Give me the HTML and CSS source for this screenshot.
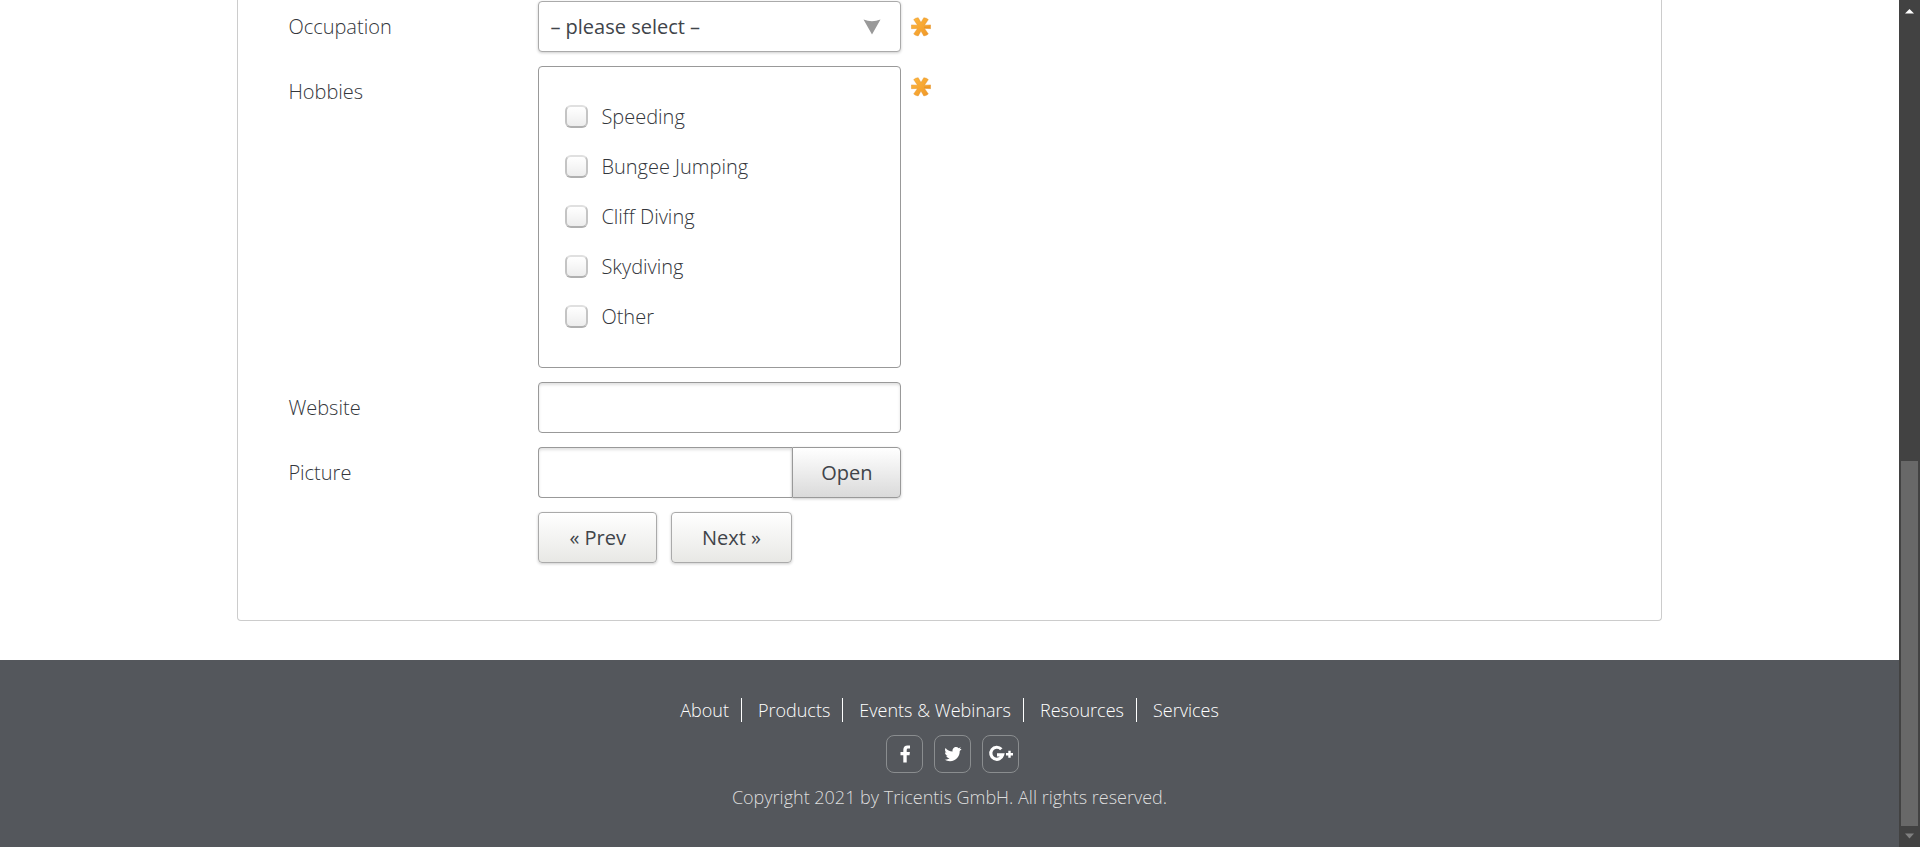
FILE: index.html
```html
<!DOCTYPE html>
<html lang="en">
<head>
<meta charset="utf-8">
<title>Enter Insurant Data</title>
<link rel="stylesheet" href="styles.css">
</head>
<body>
<svg class="defs" aria-hidden="true">
  <defs>
    <linearGradient id="star-fill" gradientUnits="userSpaceOnUse" x1="0" y1="0" x2="20" y2="20">
      <stop offset="0" stop-color="#ffb93f"/>
      <stop offset="1" stop-color="#ee9526"/>
    </linearGradient>
    <symbol id="star" viewBox="0 0 20 20">
      <path fill="url(#star-fill)" stroke="#e28a1c" stroke-opacity="0.5" stroke-width="0.8" d="M0.400 7.900L6.500 8.200L2.700 2.600Q4.500 0.800 7.200 0.700L10 5.500L12.800 0.700Q15.500 0.800 17.300 2.600L13.500 8.200L19.600 7.900V11.700L13.500 11.400L17.300 17Q15.500 18.800 12.800 18.900L10 14.100L7.200 18.900Q4.500 18.800 2.700 17L6.500 11.400L0.400 11.700Z"/>
      <path stroke="#dd8214" stroke-opacity="0.6" stroke-width="0.8" d="M13 10.200H19"/>
    </symbol>
  </defs>
</svg>
<div class="page">
  <main class="main">
    <form class="panel">
      <div class="row">
        <label class="label" for="occupation">Occupation</label>
        <div class="field select-wrap">
          <select id="occupation" class="control select"><option>– please select –</option></select>
          <svg class="arrow" viewBox="0 0 18 16" aria-hidden="true"><path d="M0.5 0.5Q9 4 17.5 0.5L9 15.5Z" fill="#999"/></svg>
        </div>
        <svg class="required"><use href="#star"/></svg>
      </div>
      <div class="row row-top">
        <span class="label" id="hobbies">Hobbies</span>
        <div class="field group" role="group" aria-labelledby="hobbies">
          <label class="option"><input type="checkbox" class="check">Speeding</label>
          <label class="option"><input type="checkbox" class="check">Bungee Jumping</label>
          <label class="option"><input type="checkbox" class="check">Cliff Diving</label>
          <label class="option"><input type="checkbox" class="check">Skydiving</label>
          <label class="option"><input type="checkbox" class="check">Other</label>
        </div>
        <svg class="required"><use href="#star"/></svg>
      </div>
      <div class="row">
        <label class="label" for="website">Website</label>
        <input id="website" class="field control" type="text">
      </div>
      <div class="row">
        <label class="label" for="picture">Picture</label>
        <div class="field picker">
          <input id="picture" class="control picker-path" type="text">
          <button type="button" class="button picker-open">Open</button>
        </div>
      </div>
      <div class="row">
        <div class="actions">
          <button type="button" class="button">« Prev</button>
          <button type="button" class="button">Next »</button>
        </div>
      </div>
    </form>
  </main>
  <footer class="footer">
    <nav class="links">
      <a href="#">About</a>
      <a href="#">Products</a>
      <a href="#">Events &amp; Webinars</a>
      <a href="#">Resources</a>
      <a href="#">Services</a>
    </nav>
    <div class="social">
      <a href="#" aria-label="Facebook"><svg viewBox="0 0 24 24"><path fill="#fff" d="M17 3.600V6.500H15.300C14 6.500 13.700 7.200 13.700 8.100V10.100H16.900L16.500 13.300H13.700V20.500H10.300V13.300H7.500V10.100H10.300V7.700C10.300 4.900 12 3.400 14.500 3.400C15.700 3.400 16.700 3.500 17 3.600Z"/></svg></a>
      <a href="#" aria-label="Twitter"><svg viewBox="0 0 24 24"><path fill="#fff" d="M20.500 7.200C19.900 8.100 19.200 8.600 18.700 9V9.500C18.700 14 15.300 19.200 9 19.200C7 19.200 5.200 18.600 3.700 17.600C5.500 17.800 7.200 17.300 8.600 16.200C7 16.200 5.700 15.100 5.200 13.800C5.800 13.900 6.300 13.900 6.800 13.700C5.100 13.400 3.900 11.900 4 10.200C4.500 10.500 5 10.600 5.600 10.700C3.900 9.500 3.600 7.500 4.500 6C6.200 8.100 8.700 9.400 11.600 9.600C11 6.900 13.100 5.100 15.100 5.100C16.100 5.100 17 5.500 17.600 6.200C18.400 6 19.100 5.700 19.800 5.300C19.500 6.200 19 6.800 18.300 7.200C19.100 7.200 19.800 6.900 20.500 7.200Z"/></svg></a>
      <a href="#" aria-label="Google Plus"><svg viewBox="0 0 24 24"><path fill="none" stroke="#fff" stroke-width="3.200" d="M12.300 7.300A6 6 0 1 0 13.600 12.800H8"/><path stroke="#fff" stroke-width="2.400" d="M20.500 8.700V15.700M17 12.200H24"/></svg></a>
    </div>
    <p class="copyright">Copyright 2021 by Tricentis GmbH. All rights reserved.</p>
  </footer>
</div>
<div class="scrollbar" aria-hidden="true">
  <svg class="scroll-arrow" viewBox="0 0 21 21"><path d="M10.500 9L15 13.500H6Z" fill="#fff"/></svg>
  <div class="track"><div class="thumb"></div></div>
  <svg class="scroll-arrow" viewBox="0 0 21 21"><path d="M10.500 12.500L15 7.500H6Z" fill="#808080"/></svg>
</div>
</body>
</html>
```
FILE: styles.css
```css
* {
  box-sizing: border-box;
}

body {
  margin: 0;
  display: flex;
  min-height: 100vh;
  background: #fff;
  color: #33363b;
  font: 300 20px/26px "Open Sans", "Liberation Sans", sans-serif;
}

.defs {
  position: absolute;
  width: 0;
  height: 0;
}

.page {
  flex: 1;
  display: flex;
  flex-direction: column;
}

.main {
  padding-bottom: 39px;
}

.panel {
  display: flex;
  flex-direction: column;
  gap: 14px;
  width: 75%;
  margin: 0 auto;
  padding: 1px 50px 57px;
  border: 1px solid #ccc;
  border-top: 0;
  border-radius: 0 0 4px 4px;
}

.row {
  display: grid;
  grid-template-columns: 250px 363px auto;
  justify-content: start;
  align-items: center;
}

.row-top {
  align-items: start;
}

.label {
  line-height: 51px;
}

.control,
.button {
  height: 51px;
  border: 1px solid #999;
  border-radius: 4px;
  color: #40444a;
  font: 400 20px/26px "Open Sans", "Liberation Sans", sans-serif;
}

.control {
  width: 100%;
  padding: 0 11px;
  background: #fff;
  box-shadow: inset 0 2px 3px rgba(0, 0, 0, 0.12);
}

.select-wrap {
  position: relative;
}

.select {
  display: block;
  appearance: none;
  border-color: #aaa;
  box-shadow: 0 1px 3px rgba(0, 0, 0, 0.2);
}

.arrow {
  position: absolute;
  top: 18px;
  right: 20px;
  width: 18px;
  height: 16px;
  pointer-events: none;
}

.required {
  width: 20px;
  height: 20px;
  margin-left: 10px;
}

.row-top .required {
  margin-top: 11px;
}

.group {
  padding: 25px 26px;
  border: 1px solid #999;
  border-radius: 4px;
}

.option {
  display: flex;
  align-items: center;
  gap: 13px;
  height: 50px;
}

.check {
  appearance: none;
  width: 23px;
  height: 23px;
  margin: 0 0 2px;
  border: 2px solid #c4c4c4;
  border-top-color: #e0e0e0;
  border-bottom-color: #b0b0b0;
  border-radius: 6px;
  background: linear-gradient(#fff, #ededed);
}

.button {
  padding: 0 30px;
  border-color: #aaa;
  background: linear-gradient(#fff, #e8e8e5);
  box-shadow: 0 1px 3px rgba(0, 0, 0, 0.2);
}

.picker {
  display: flex;
}

.picker-path {
  flex: 1;
  min-width: 0;
  border-right: 0;
  border-radius: 4px 0 0 4px;
}

.picker-open {
  width: 109px;
  padding: 0;
  border-color: #999;
  border-radius: 0 4px 4px 0;
  background: linear-gradient(#fff, #dadada);
}

.actions {
  grid-column: 2;
  display: flex;
  gap: 14px;
}

.footer {
  flex: 1;
  display: flex;
  flex-direction: column;
  align-items: center;
  padding-top: 38px;
  background: #54575c;
  color: #ddd;
  font-size: 18px;
  line-height: 24px;
}

.links {
  display: flex;
}

.links a {
  padding: 0 12px 0 16px;
  border-right: 1px solid #fff;
  color: #fff;
  text-decoration: none;
}

.links a:first-child {
  padding-left: 0;
}

.links a:last-child {
  padding-right: 0;
  border-right: 0;
}

.social {
  display: flex;
  gap: 11px;
  margin-top: 13px;
  padding-left: 6px;
}

.social a {
  display: grid;
  place-items: center;
  width: 37px;
  height: 38px;
  border: 1px solid #8a8d8f;
  border-radius: 8px;
}

.social svg {
  width: 24px;
  height: 24px;
  overflow: visible;
}

.copyright {
  margin: 12px 0 0;
}

.scrollbar {
  display: flex;
  flex-direction: column;
  width: 21px;
  background: #424242;
}

.scroll-arrow {
  width: 21px;
  height: 21px;
}

.track {
  flex: 1;
  display: flex;
  align-items: flex-end;
  padding: 0 2px;
}

.thumb {
  width: 100%;
  height: 45.400%;
  background: #686868;
}
```
